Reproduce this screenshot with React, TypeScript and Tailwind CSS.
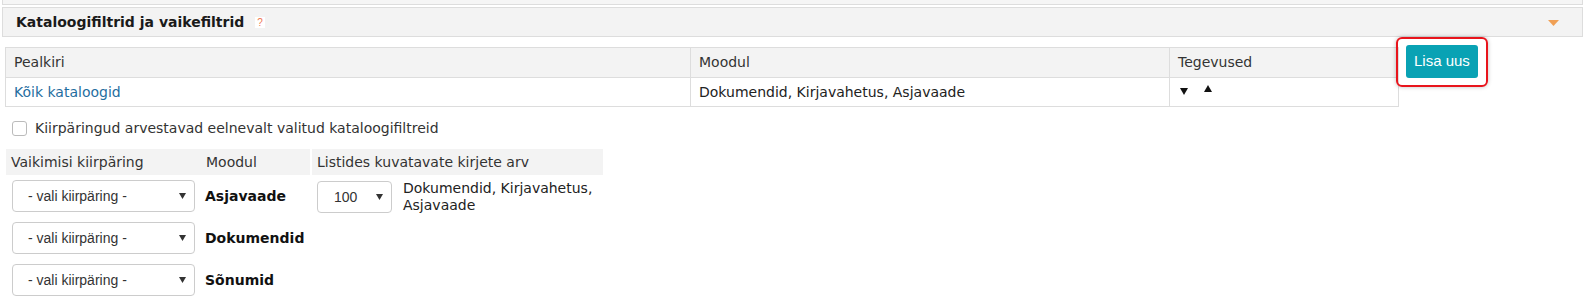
import React from "react";

const Down = ({ className = "" }: { className?: string }) => (
  <svg width="8" height="7" viewBox="0 0 8 7" className={className}>
    <polygon points="0,0 8,0 4,7" fill="#111" />
  </svg>
);
const Up = ({ className = "" }: { className?: string }) => (
  <svg width="8" height="7" viewBox="0 0 8 7" className={className}>
    <polygon points="0,7 8,7 4,0" fill="#111" />
  </svg>
);
const SelArrow = () => (
  <svg width="7" height="6" viewBox="0 0 7 6">
    <polygon points="0,0 7,0 3.5,6" fill="#333" />
  </svg>
);

const Select = ({ label, w, pl }: { label: string; w: string; pl: string }) => (
  <div
    className={`${w} h-[32px] border border-[#ccc] rounded-[4px] bg-white flex items-center justify-between ${pl} pr-[8px] font-['Liberation_Sans',Arial,sans-serif] text-[14px] text-[#333]`}
  >
    <span>{label}</span>
    <SelArrow />
  </div>
);

export default function App() {
  const rows = ["Asjavaade", "Dokumendid", "Sõnumid"];
  return (
    <div className="w-[1588px] h-[307px] bg-white overflow-hidden font-['DejaVu_Sans',Verdana,sans-serif] text-[14px] text-[#333]">
      <div className="ml-[2px] w-[1581px] h-[5px] bg-[#f5f5f5] border-x border-b border-[#ddd]" />
      <div className="ml-[2px] mt-[2px] w-[1581px] h-[30px] bg-[#f3f3f3] border border-[#ddd] flex items-center pl-[13px] pr-[23px]">
        <span className="font-bold text-[#1a1a1a]">Kataloogifiltrid ja vaikefiltrid</span>
        <span className="ml-[11px] bg-white text-[#f07850] text-[10px] leading-[11px] px-[2px] font-['Liberation_Sans',Arial,sans-serif]">?</span>
        <svg width="11" height="6" viewBox="0 0 11 6" className="ml-auto mt-[1px]">
          <polygon points="0,0 11,0 5.5,6" fill="#f0a055" />
        </svg>
      </div>

      <div className="flex items-start mt-[10px]">
        <div className="ml-[5px] w-[1394px] border border-[#ddd]">
          <div className="flex h-[30px] bg-[#f3f3f3] border-b border-[#ddd]">
            <div className="w-[685px] border-r border-[#ddd] px-[8px] flex items-center">Pealkiri</div>
            <div className="w-[479px] border-r border-[#ddd] px-[8px] flex items-center">Moodul</div>
            <div className="flex-1 px-[8px] flex items-center">Tegevused</div>
          </div>
          <div className="flex h-[28px]">
            <div className="w-[685px] border-r border-[#ddd] px-[8px] flex items-center text-[#1f6ea0]">Kõik kataloogid</div>
            <div className="w-[479px] border-r border-[#ddd] px-[8px] flex items-center text-[#222]">
              Dokumendid, Kirjavahetus, Asjavaade
            </div>
            <div className="flex-1 pl-[10px] flex items-start pt-[7px]">
              <Down className="mt-[3px]" />
              <Up className="ml-[16px]" />
            </div>
          </div>
        </div>
        <div className="relative ml-[7px] -mt-[2px]">
          <div className="absolute -left-[10px] -top-[8px] -right-[10px] -bottom-[9px] border-2 border-[#e8141c] rounded-[6px] shadow-[0_0_4px_rgba(0,0,0,0.25)]" />
          <div className="relative h-[33px] px-[8px] bg-[#09a2b4] rounded-[3px] text-white flex items-center font-['Liberation_Sans',Arial,sans-serif] text-[15px]">
            Lisa uus
          </div>
        </div>
      </div>

      <div className="flex items-center mt-[13px] ml-[12px] h-[16px]">
        <div className="w-[15px] h-[15px] border border-[#bbb] rounded-[3px] bg-white" />
        <span className="ml-[8px]">Kiirpäringud arvestavad eelnevalt valitud kataloogifiltreid</span>
      </div>

      <div className="flex items-start ml-[6px] mt-[13px]">
        <div className="w-[304px]">
          <div className="h-[26px] bg-[#f3f3f3] flex items-center">
            <div className="w-[194px] pl-[5px]">Vaikimisi kiirpäring</div>
            <div className="pl-[6px]">Moodul</div>
          </div>
          {rows.map((r) => (
            <div key={r} className="h-[42px] flex items-center">
              <div className="w-[194px] pl-[6px]">
                <Select label="- vali kiirpäring -" w="w-[183px]" pl="pl-[15px]" />
              </div>
              <div className="pl-[5px] font-bold text-[14px] text-[#111]">{r}</div>
            </div>
          ))}
        </div>
        <div className="ml-[2px] w-[291px]">
          <div className="h-[26px] bg-[#f3f3f3] flex items-center pl-[5px]">Listides kuvatavate kirjete arv</div>
          <div className="flex items-start pl-[5px] pt-[6px]">
            <Select label="100" w="w-[75px]" pl="pl-[16px]" />
            <div className="ml-[11px] w-[198px] leading-[17px] mt-[-1px] text-[#222]">
              Dokumendid, Kirjavahetus, Asjavaade
            </div>
          </div>
        </div>
      </div>
    </div>
  );
}
